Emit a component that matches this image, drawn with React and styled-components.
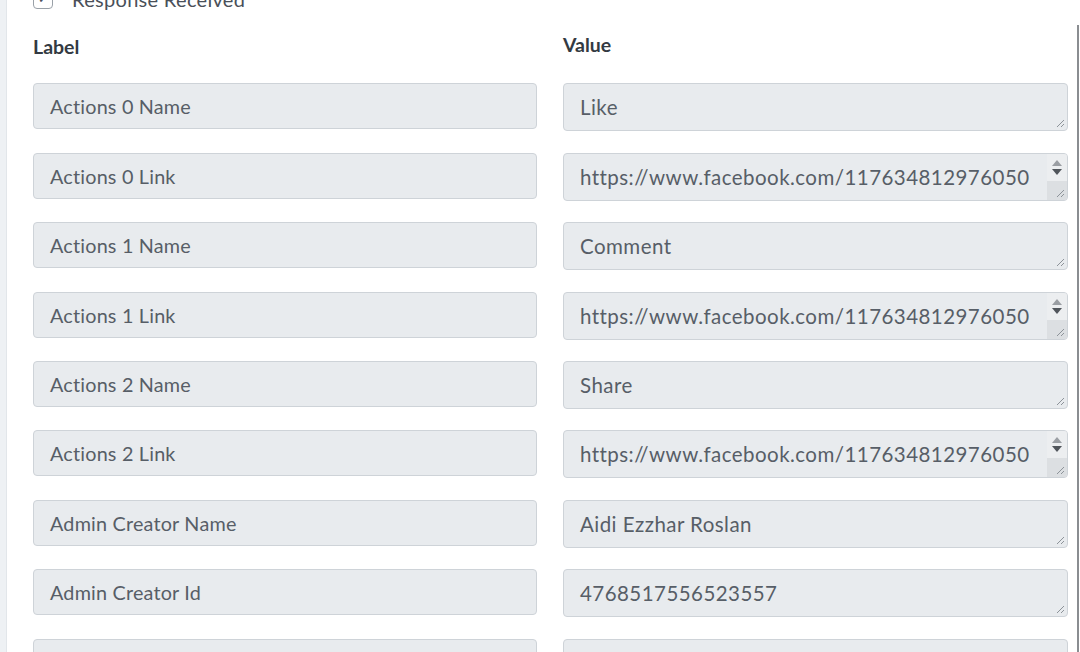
import React from "react";
import styled, { createGlobalStyle } from "styled-components";

const GlobalStyle = createGlobalStyle`
  html, body {
    margin: 0;
    padding: 0;
    height: 100%;
    overflow: hidden;
    background: #eef1f4;
  }
  body {
    font-family: "Lato", "Open Sans", sans-serif;
  }
`;

const Page = styled.div`
  position: relative;
  height: 652px;
  margin-left: 6px;
  background: #ffffff;
  border-left: 1px solid #e2e6ea;
  overflow: hidden;

  /* outer scrollbar thumb on the far right */
  &::after {
    content: "";
    position: absolute;
    right: 1px;
    top: 25px;
    bottom: 0;
    width: 2px;
    background: #8a8d91;
  }
`;

const Content = styled.div`
  padding: 0 12px 0 26px;
  margin-top: -12px;
`;

const CheckRow = styled.div`
  display: flex;
  align-items: center;
  gap: 19px;
  height: 22px;
  font-size: 20px;
  letter-spacing: 0.3px;
  color: #4a5059;
`;

const CheckBox = styled.span`
  display: flex;
  align-items: center;
  justify-content: center;
  width: 18px;
  height: 18px;
  border: 1px solid #9aa1a8;
  border-radius: 4px;
  background: #fff;
  font-size: 12px;
  line-height: 1;
  color: #4a5059;
`;

const Grid = styled.div`
  display: grid;
  grid-template-columns: 504px 505px;
  column-gap: 26px;
  row-gap: 21.4px;
  margin-top: 22px;
`;

const Heading = styled.div`
  font-size: 19.5px;
  font-weight: 700;
  color: #333a42;
  height: 30px;
  line-height: 30px;
  margin-top: ${(p) => (p.$lift ? "-2px" : "0")};
  margin-bottom: ${(p) => (p.$lift ? "2px" : "0")};
`;

const Box = styled.div`
  position: relative;
  box-sizing: border-box;
  height: ${(p) => (p.$area ? "48px" : "46px")};
  background: #e8ebee;
  border: 1px solid #ced3d8;
  border-radius: 4px;
  overflow: hidden;
  padding: 0 ${(p) => (p.$scroll ? "24px" : "16px")} 0 16px;
  font-size: ${(p) => (p.$area ? "20.5px" : "19.8px")};
  letter-spacing: ${(p) => (p.$area ? "0.45px" : "0.2px")};
  color: #575e67;
  line-height: ${(p) => (p.$area ? "47px" : "45px")};
  white-space: ${(p) => (p.$scroll ? "normal" : "nowrap")};
`;

const WrapText = styled.div`
  line-height: 32px;
  padding-top: 7px;
`;

const ScrollTrack = styled.div`
  position: absolute;
  top: 0;
  right: 0;
  bottom: 0;
  width: 20px;
  display: flex;
  flex-direction: column;
  background: #dcdfe2;
`;

const ScrollArrows = styled.div`
  height: 27px;
  background: #eceef0;
  display: flex;
  flex-direction: column;
  align-items: center;
  justify-content: center;
  gap: 3px;
`;

const Grip = styled.svg`
  position: absolute;
  right: 2px;
  bottom: 2px;
  width: 10px;
  height: 10px;
`;

const ResizeGrip = () => (
  <Grip viewBox="0 0 10 10">
    <path d="M9 2 L2 9 M9 6 L6 9" stroke="#8d9399" strokeWidth="1" />
  </Grip>
);

const Arrow = ({ up }) => (
  <svg width="10" height="6" viewBox="0 0 10 6">
    <path d={up ? "M5 0 L10 6 L0 6 Z" : "M0 0 L10 0 L5 6 Z"} fill={up ? "#9a9ea3" : "#50555b"} />
  </svg>
);

const postUrl = ["https://www.facebook.com/117634812976050", "/posts/184528716953326"];

const rows = [
  ["Actions 0 Name", "Like"],
  ["Actions 0 Link", postUrl],
  ["Actions 1 Name", "Comment"],
  ["Actions 1 Link", postUrl],
  ["Actions 2 Name", "Share"],
  ["Actions 2 Link", postUrl],
  ["Admin Creator Name", "Aidi Ezzhar Roslan"],
  ["Admin Creator Id", "4768517556523557"],
  ["", ""],
];

const App = () => {
  return (
    <>
      <GlobalStyle />
      <Page>
        <Content>
          <CheckRow>
            <CheckBox>✓</CheckBox>
            Response Received
          </CheckRow>
          <Grid>
            <Heading>Label</Heading>
            <Heading $lift>Value</Heading>
            {rows.map(([label, value], i) => {
              const long = Array.isArray(value);
              return (
                <React.Fragment key={i}>
                  <Box>{label}</Box>
                  <Box $area $scroll={long}>
                    {long ? (
                      <WrapText>
                        {value[0]}
                        <wbr />
                        {value[1]}
                      </WrapText>
                    ) : (
                      value
                    )}
                    {long && (
                      <ScrollTrack>
                        <ScrollArrows>
                          <Arrow up />
                          <Arrow />
                        </ScrollArrows>
                      </ScrollTrack>
                    )}
                    <ResizeGrip />
                  </Box>
                </React.Fragment>
              );
            })}
          </Grid>
        </Content>
      </Page>
    </>
  );
};

export default App;
